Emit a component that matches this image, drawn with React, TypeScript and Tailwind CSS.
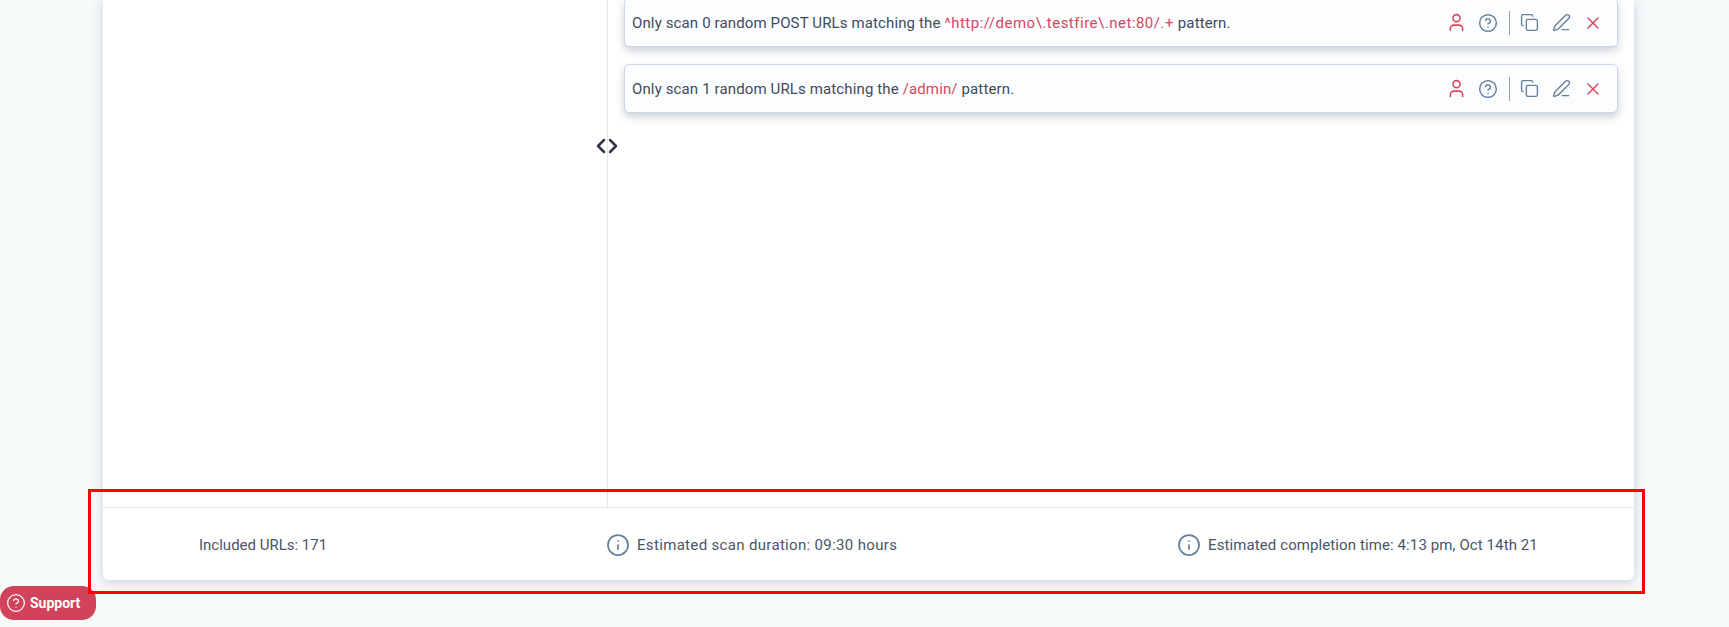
import { CircleHelp, ChevronLeft, ChevronRight, Copy, Info, PenLine, User, X } from "lucide-react";
import type { ReactNode } from "react";

const fontStack = { fontFamily: '"Roboto", "Liberation Sans", sans-serif' };

function RuleRow({ children }: { children: ReactNode }) {
  return (
    <div className="flex h-[49px] items-center rounded-[5px] border border-[#c9d6e8] bg-[#fbfdfe] pl-[7px] pr-[14px] shadow-[0_4px_8px_rgba(71,85,105,0.28)]">
      <p className="flex-1 pt-[2px] text-[15px] tracking-[0.13px] text-[#414b5c]">{children}</p>
      <User size={21} strokeWidth={1.75} className="mr-[11px] text-[#d9465f]" />
      <CircleHelp size={20} strokeWidth={1.75} className="mr-[11px] text-[#64809c]" />
      <div className="mr-[10px] h-[24px] w-px bg-[#8aa0b8]" />
      <Copy size={19} strokeWidth={1.75} className="mr-[13px] text-[#64809c]" />
      <PenLine size={19} strokeWidth={1.75} className="mr-[12px] text-[#64809c]" />
      <X size={20} strokeWidth={1.75} className="text-[#d9465f]" />
    </div>
  );
}

function Estimate({ children, className }: { children: ReactNode; className: string }) {
  return (
    <div className={`flex items-center gap-[7px] ${className}`}>
      <Info size={24} strokeWidth={1.75} className="text-[#64809c]" />
      <span>{children}</span>
    </div>
  );
}

export default function App() {
  return (
    <div style={fontStack} className="relative flex h-[627px] w-full flex-col overflow-hidden bg-[#f7fafb] pb-[47px] pl-[103px] pr-[95px]">
      <div className="flex min-h-0 flex-1 flex-col rounded-b-[6px] bg-white shadow-[0_2px_12px_rgba(71,85,105,0.26)]">
        <div className="flex min-h-0 flex-1">
          <div className="w-[505px] shrink-0 border-r border-[#e2e8f0]" />
          <div className="relative flex-1 pl-[16px] pr-[16px]">
            <div className="-mt-[2px] flex flex-col gap-[17px]">
              <RuleRow>
                Only scan 0 random POST URLs matching the <span className="tracking-[0.5px] text-[#d9465f]">^http://demo\.testfire\.net:80/.+</span> pattern.
              </RuleRow>
              <RuleRow>
                Only scan 1 random URLs matching the <span className="text-[#d9465f]">/admin/</span> pattern.
              </RuleRow>
            </div>
            <div className="absolute left-[-19px] top-[134px] flex text-[#2d3748]">
              <ChevronLeft size={24} strokeWidth={2.5} />
              <ChevronRight size={24} strokeWidth={2.5} className="-ml-[12px]" />
            </div>
          </div>
        </div>
        <div className="flex h-[73px] shrink-0 items-center border-t border-[#e2e8f0] pl-[96px] pt-[2px] text-[15px] text-[#4a5568]">
          <span className="w-[407px]">Included URLs: 171</span>
          <Estimate className="w-[571px] tracking-[0.33px]">Estimated scan duration: 09:30 hours</Estimate>
          <Estimate className="flex-1 tracking-[0.1px]">Estimated completion time: 4:13 pm, Oct 14th 21</Estimate>
        </div>
      </div>

      <div className="absolute bottom-[7px] left-0 flex h-[34px] w-[96px] items-center gap-[4px] rounded-[14px] bg-[#d1435b] pl-[6px] text-[14px] font-bold text-white">
        <CircleHelp size={20} strokeWidth={1.5} />
        Support
      </div>

      {/* annotation frame from the original capture */}
      <div className="pointer-events-none absolute left-[88px] top-[489px] h-[105px] w-[1557px] border-[3px] border-[#ff0000]" />
    </div>
  );
}
